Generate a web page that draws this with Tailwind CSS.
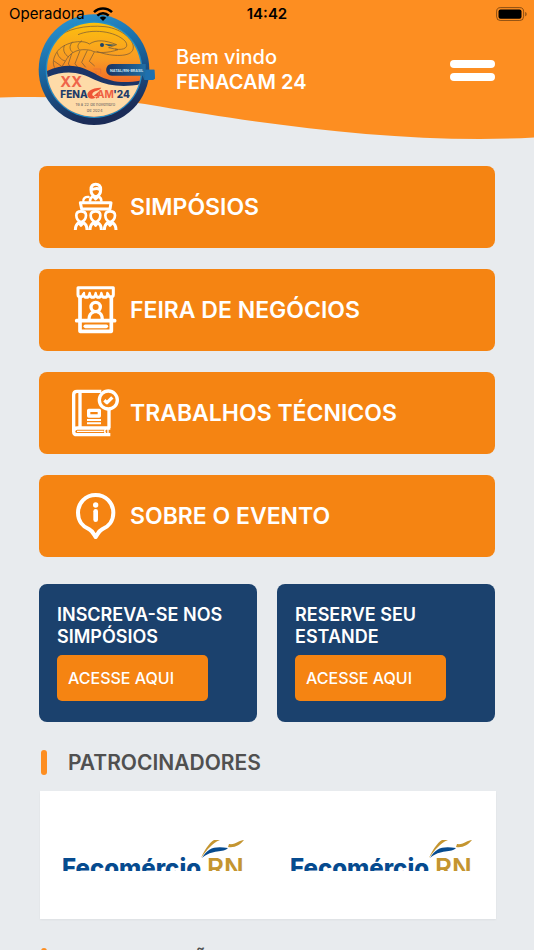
<!DOCTYPE html>
<html lang="pt-BR">
<head>
  <meta charset="UTF-8"/>
  <meta name="viewport" content="width=device-width, initial-scale=1.0"/>
  <title>FENACAM 24</title>
  <script src="https://cdn.jsdelivr.net/npm/@tailwindcss/browser@4"></script>
</head>
<body class="bg-[#e8ebee] h-screen overflow-hidden font-['Inter',sans-serif]">

  <!-- Header -->
  <header class="relative h-[140px]">
    <svg class="absolute inset-0 w-full h-full" viewBox="0 0 534 140" preserveAspectRatio="none" aria-hidden="true">
      <path fill="#fd8e21" d="M0 0H534V137.500C515 138.500 498 139 480 139C370 139 250 122 160 106.500C110 98 60 96 0 97.500Z"/>
    </svg>

    <!-- Status bar -->
    <div class="relative z-10 h-7 px-[9px] grid grid-cols-3 items-center text-[15px] text-black">
      <div class="flex items-center gap-2">
        <span>Operadora</span>
        <svg class="w-5 h-[14px]" viewBox="0 0 20 14" fill="none" stroke="#000" stroke-width="2.500" aria-hidden="true">
          <path d="M1 5.200C6 .2 14 .2 19 5.200M4.300 8.600C7.500 5.500 12.500 5.500 15.700 8.600"/>
          <path d="M10 14L6.700 10.700C8.500 9 11.500 9 13.300 10.700Z" fill="#000" stroke="none"/>
        </svg>
      </div>
      <span class="text-center font-semibold">14:42</span>
      <svg class="justify-self-end -mr-[3px] w-8 h-[14px]" viewBox="0 0 32 14" aria-hidden="true">
        <rect x=".6" y=".6" width="27" height="13" rx="4" fill="none" stroke="#000" stroke-opacity=".45"/>
        <rect x="2.500" y="2.500" width="23" height="9.300" rx="2" fill="#000"/>
        <path d="M29.300 5C31 5.500 31 8.700 29.300 9.200Z" fill="#000" fill-opacity=".5"/>
      </svg>
    </div>

    <div class="relative flex items-start px-[38px]">
      <svg class="-mt-[15px] w-[118px] h-[114px] shrink-0" viewBox="114 39 354 342" role="img" aria-label="XX FENACAM 24">
        <defs>
          <linearGradient id="ring" x1="0" y1="0" x2=".3" y2="1">
            <stop offset="0" stop-color="#2a9bd8"/>
            <stop offset=".5" stop-color="#1a68a2"/>
            <stop offset="1" stop-color="#1b2c58"/>
          </linearGradient>
          <linearGradient id="sky" x1="0" y1="0" x2="0" y2="1">
            <stop offset="0" stop-color="#fcc30b"/>
            <stop offset=".4" stop-color="#f99a24"/>
            <stop offset=".7" stop-color="#f05a28"/>
          </linearGradient>
          <linearGradient id="tag" x1="0" y1="0" x2="1" y2="0">
            <stop offset="0" stop-color="#1b3260"/>
            <stop offset="1" stop-color="#217db5"/>
          </linearGradient>
          <clipPath id="disc"><circle cx="282" cy="209" r="141"/></clipPath>
        </defs>
        <circle cx="282" cy="209" r="166" fill="url(#ring)"/>
        <circle cx="282" cy="209" r="145" fill="#2390c8"/>
        <g clip-path="url(#disc)">
          <rect x="135" y="60" width="294" height="300" fill="url(#sky)"/>
          <!-- shrimp -->
          <g fill="none" stroke="#7a5a38" stroke-width="2.200">
            <path d="M170 114C198 88 255 74 315 80C368 86 410 126 398 151C386 174 325 168 290 154"/>
            <path d="M234 104C275 86 345 92 376 124C388 141 374 152 345 147"/>
            <path d="M268 132C290 118 315 120 350 134L326 143L354 149C326 159 290 161 272 151"/>
            <path d="M268 132C246 116 188 128 170 157C158 177 158 192 164 203M272 151C240 144 211 154 197 182L184 203"/>
            <path d="M246 122C232 132 231 141 238 149M218 125C206 138 209 151 219 158M194 135C187 149 193 163 206 171M172 157C174 170 184 180 196 183M162 183L185 199"/>
            <path d="M240 152L225 191L234 203M262 151L245 187L257 202M283 156L268 184L284 198M215 161L205 192L216 204"/>
          </g>
          <circle cx="306" cy="135" r="6" fill="#1c4268"/>
          <path d="M313 132L350 134L327 139Z" fill="#2b5468"/>
          <path d="M280 207H302V221M288 214V226" fill="none" stroke="#e06c3c" stroke-width="2"/>
          <path d="M130 226C202 195 244 209 285 230C334 256 370 258 430 245V370H130Z" fill="#fedba8"/>
          <path d="M130 218C205 181 249 201 292 225C335 248 376 252 434 239V251C372 263 329 259 284 239C240 219 202 205 130 236Z" fill="#1b3567"/>
        </g>
        <path d="M336 192H437V209H463L465 236L458 240H433L428 227H336C313 227 313 192 336 192Z" fill="url(#tag)"/>
        <path d="M437 209H463L465 236L458 240H434Z" fill="#1e70ae"/>
        <text x="330" y="215" font-size="11" font-weight="700" fill="#c7e4f3">NATAL/RN-BRASIL</text>
        <text x="181" y="262" font-size="44" font-weight="700" fill="#ef654a">XX</text>
        <text x="181" y="295" font-size="30" font-weight="800" fill="#1e3c69">FENA</text>
        <path d="M304 263C276 262 256 276 264 290C270 300 286 296 292 288C280 291 273 286 279 278C285 271 296 274 304 263ZM280 289L298 273L291 296Z" fill="#ee5535"/>
        <text x="291" y="295" font-size="30" font-weight="700" fill="#ef5f42">AM</text>
        <text x="340" y="295" font-size="30" font-weight="800" fill="#1e3c69">'24</text>
        <text x="286" y="319" font-size="12" text-anchor="middle" fill="#655c60">19 a 22 de novembro</text>
        <text x="284" y="335" font-size="12" text-anchor="middle" fill="#655c60">de 2024</text>
      </svg>
      <div class="ml-5 mt-[17px] text-white text-xl leading-[25px]">
        <p class="font-medium">Bem vindo</p>
        <h1 class="font-semibold">FENACAM 24</h1>
      </div>
      <button type="button" aria-label="Menu" class="ml-auto mt-8 mr-px flex flex-col gap-[5px]">
        <span class="block w-[45px] h-2 rounded-full bg-white"></span>
        <span class="block w-[45px] h-2 rounded-full bg-white"></span>
      </button>
    </div>
  </header>

  <main class="px-[39px] pt-[26px]">
    <!-- Menu -->
    <nav class="flex flex-col gap-[21px]">
      <a href="#" class="flex items-center gap-[10px] h-[82px] pl-[33px] rounded-lg bg-[#f58412] text-white text-[23px] font-semibold">
        <svg class="w-12 h-12 shrink-0 overflow-visible" viewBox="126 69 144 144" fill="none" stroke="#fff" stroke-width="9" stroke-linejoin="round" aria-hidden="true">
          <path d="M183 89C183 77 188 73 197 73C206 73 212 77 212 89C212 101 205 108 197 111C189 108 183 101 183 89Z"/>
          <path d="M185 87C192 90 197 81 209 88"/>
          <path d="M189 108L197 117L206 108M180 125C180 116 184 111 190 110M214 125C214 116 210 111 204 110" stroke-width="8"/>
          <path d="M160 126C158 115 166 110 176 111" stroke-width="7" stroke-linecap="round"/>
          <path d="M151 128H243L240 147H155Z"/>
          <path d="M139 166C139 157 144 154 153 154C162 154 168 158 168 166C168 177 161 184 153 187C145 184 139 177 139 166ZM182 166C182 157 187 154 197 154C206 154 211 158 211 166C211 177 205 184 197 187C188 184 182 177 182 166ZM226 166C226 157 231 154 240 154C249 154 255 158 255 166C255 177 248 184 240 187C232 184 226 177 226 166Z" stroke-width="8"/>
          <path d="M136 210C136 198 140 192 147 188L153 196L160 188C168 192 171 199 171 210M180 210C180 198 184 192 191 188L197 196L203 188C211 192 214 199 214 210M223 210C223 198 227 192 234 188L240 196L247 188C254 192 258 199 258 210"/>
        </svg>
        SIMPÓSIOS
      </a>
      <a href="#" class="flex items-center gap-[10px] h-[82px] pl-[33px] rounded-lg bg-[#f58412] text-white text-[23px] font-semibold">
        <svg class="w-12 h-12 shrink-0 overflow-visible" viewBox="126 63 144 144" fill="none" stroke="#fff" stroke-width="11" stroke-linejoin="round" stroke-linecap="round" aria-hidden="true">
          <path d="M144 68H250V89C250 99 237 99 234 88C231 100 217 100 214 88C211 100 200 100 197 88C194 100 182 100 179 88C176 100 163 100 160 88C157 99 144 99 144 89Z" stroke-width="9"/>
          <path d="M162 84V91M179 84V91M197 84V91M214 84V91M232 84V91" stroke-width="7"/>
          <path d="M150 96V199H244V96M140 167H254"/>
          <path d="M166 184H229"/>
          <circle cx="197" cy="126" r="14" stroke-width="10"/>
          <path d="M177 164C177 150 184 143 191 141M217 164C217 150 210 143 203 141" stroke-width="10"/>
        </svg>
        FEIRA DE NEGÓCIOS
      </a>
      <a href="#" class="flex items-center gap-[10px] h-[82px] pl-[33px] rounded-lg bg-[#f58412] text-white text-[23px] font-semibold">
        <svg class="w-12 h-12 shrink-0 overflow-visible" viewBox="126 63 144 144" fill="none" stroke="#fff" stroke-width="10" stroke-linejoin="round" aria-hidden="true">
          <path d="M214 70H141C134 70 131 74 131 80V191C131 197 135 200 141 200H241M131 188C133 182 137 180 142 180H241M237 124V180M150 70V180"/>
          <path d="M141 190H221M227 182C223 187 223 193 227 198M234 182V198" stroke-width="4"/>
          <circle cx="235" cy="96" r="27"/>
          <path d="M223 97L231 104L247 88"/>
          <path d="M176 127H208V144H176Z"/>
          <path d="M171 156H213M171 166H213" stroke-width="6"/>
        </svg>
        TRABALHOS TÉCNICOS
      </a>
      <a href="#" class="flex items-center gap-[10px] h-[82px] pl-[33px] rounded-lg bg-[#f58412] text-white text-[23px] font-semibold">
        <svg class="w-12 h-12 shrink-0 overflow-visible" viewBox="126 66 144 144" fill="none" stroke="#fff" stroke-width="12" stroke-linejoin="round" stroke-linecap="round" aria-hidden="true">
          <path d="M197 75C167 75 144 98 144 128C144 152 158 170 178 178C187 182 190 191 197 201C204 191 207 182 216 178C236 170 250 152 250 128C250 98 227 75 197 75Z"/>
          <path d="M197 124V149" stroke-width="14"/>
          <circle cx="197" cy="105" r="8" fill="#fff" stroke="none"/>
        </svg>
        SOBRE O EVENTO
      </a>
    </nav>

    <!-- Call to action cards -->
    <section class="mt-[27px] grid grid-cols-2 gap-5">
      <div class="h-[138px] rounded-lg bg-[#1b416d] px-[18px] pt-[20px] text-white">
        <h2 class="text-lg leading-[22px] font-semibold">INSCREVA-SE NOS<br>SIMPÓSIOS</h2>
        <button type="button" class="mt-[7px] w-[151px] h-[46px] rounded-[5px] bg-[#f58412] pl-[11px] text-left text-base font-medium">ACESSE AQUI</button>
      </div>
      <div class="h-[138px] rounded-lg bg-[#1b416d] px-[18px] pt-[20px] text-white">
        <h2 class="text-lg leading-[22px] font-semibold">RESERVE SEU<br>ESTANDE</h2>
        <button type="button" class="mt-[7px] w-[151px] h-[46px] rounded-[5px] bg-[#f58412] pl-[11px] text-left text-base font-medium">ACESSE AQUI</button>
      </div>
    </section>

    <!-- Sponsors -->
    <section class="mt-7">
      <h2 class="flex items-center gap-[21px] h-[25px] pl-[2px] text-[21px] leading-[25px] font-semibold text-[#505050]">
        <span class="w-[6px] h-[25px] rounded-full bg-[#fd8e21]"></span>
        PATROCINADORES
      </h2>
      <div class="ml-px -mr-px mt-4 h-[128px] grid grid-cols-2 items-center bg-white shadow-xs">
        <svg class="ml-[23px] w-[182px] h-[31px]" viewBox="0 0 182 31" role="img" aria-label="Fecomércio RN">
          <text x="-1" y="36" font-size="24" font-weight="800" fill="#064b8f">Fecomércio</text>
          <text x="144" y="37" font-size="26" font-weight="600" fill="#c49530">RN</text>
          <path d="M138 18C141 11 146 3 151 0H157C149 3 144 10 138 18ZM166 4C173 5 176 0 181 0C177 5 172 8 165 7Z" fill="#c49530"/>
          <path d="M139 18C145 8 151 6 165 8C161 13 149 9 139 18Z" fill="#064b8f"/>
        </svg>
        <svg class="ml-[23px] w-[182px] h-[31px]" viewBox="0 0 182 31" role="img" aria-label="Fecomércio RN">
          <text x="-1" y="36" font-size="24" font-weight="800" fill="#064b8f">Fecomércio</text>
          <text x="144" y="37" font-size="26" font-weight="600" fill="#c49530">RN</text>
          <path d="M138 18C141 11 146 3 151 0H157C149 3 144 10 138 18ZM166 4C173 5 176 0 181 0C177 5 172 8 165 7Z" fill="#c49530"/>
          <path d="M139 18C145 8 151 6 165 8C161 13 149 9 139 18Z" fill="#064b8f"/>
        </svg>
      </div>
    </section>

    <section class="mt-[29px]">
      <h2 class="flex items-center gap-[21px] h-[25px] pl-[2px] text-[21px] leading-[25px] font-semibold text-[#505050]">
        <span class="w-[6px] h-[25px] rounded-full bg-[#fd8e21]"></span>
        ORGANIZAÇÃO
      </h2>
    </section>
  </main>

</body>
</html>
